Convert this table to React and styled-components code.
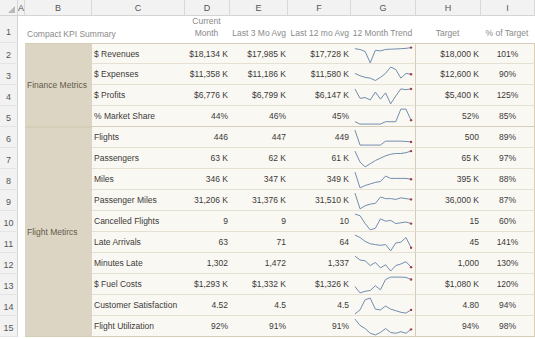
import React from 'react';
import styled, { createGlobalStyle } from 'styled-components';

const GlobalStyle = createGlobalStyle`
  html, body {
    margin: 0;
    padding: 0;
    background: #ffffff;
  }
  body {
    font-family: "Liberation Sans", Arial, sans-serif;
    font-size: 8.5px;
    color: #3a3a3a;
  }
`

const LINE = '#e6e0d2';
const FRAME = '#d6cdb9';

const Sheet = styled.div`
  display: grid;
  grid-template-columns: 18px 7px 67px 93px 45px 58px 63px 65px 65px 54px;
  grid-template-rows: 16px 27px repeat(14, 21px);
  width: 535px;
  height: 339px;
  overflow: hidden;
  background: #ffffff;
`

const Corner = styled.div`
  background: #f2f2f2;
  border-right: 1px solid #d4d4d4;
  border-bottom: 1px solid #d4d4d4;
  position: relative;

  &::after {
    content: '';
    position: absolute;
    right: 2px;
    bottom: 2px;
    border-left: 7px solid transparent;
    border-bottom: 7px solid #b9b9b9;
  }
`

const ColHead = styled.div`
  display: flex;
  align-items: center;
  justify-content: center;
  background: #f2f2f2;
  border-right: 1px solid #d8d8d8;
  border-bottom: 1px solid #d4d4d4;
  color: #555555;
  font-size: 9px;
`

const RowHead = styled.div`
  display: flex;
  align-items: flex-end;
  justify-content: center;
  padding-bottom: ${p => (p.$first ? '5px' : '3px')};
  box-sizing: border-box;
  background: #f2f2f2;
  border-right: 1px solid #d4d4d4;
  border-bottom: 1px solid #e4e4e4;
  color: #555555;
  font-size: 9px;
`

const Blank = styled.div`
  background: #ffffff;
`

const Title = styled.div`
  grid-column: span 2;
  display: flex;
  align-items: flex-end;
  padding: 0 0 4px 2px;
  color: #8a8a8a;
  white-space: nowrap;
`

const HeadCell = styled.div`
  display: flex;
  align-items: flex-end;
  justify-content: ${p => (p.$align === 'center' ? 'center' : 'flex-end')};
  text-align: ${p => p.$align || 'right'};
  padding: 0 2px 4px 0;
  color: #8a8a8a;
  line-height: 12px;
  white-space: nowrap;
`

const Group = styled.div`
  grid-row: span ${p => p.$span};
  display: flex;
  align-items: center;
  padding-left: 2px;
  background: #ddd5c3;
  border-top: 1px solid ${FRAME};
  border-bottom: 1px solid ${FRAME};
  color: #615b4c;
  white-space: nowrap;
`

const Cell = styled.div`
  display: flex;
  align-items: center;
  justify-content: ${p => (p.$align === 'center' ? 'center' : p.$align === 'left' ? 'flex-start' : 'flex-end')};
  padding: 0 2px;
  box-sizing: border-box;
  background: #faf8f2;
  border-bottom: 1px solid ${p => (p.$groupEnd ? FRAME : LINE)};
  border-top: ${p => (p.$top ? `1px solid ${FRAME}` : 'none')};
  border-right: ${p => (p.$edge ? `1px solid ${FRAME}` : 'none')};
  white-space: nowrap;
  overflow: hidden;
`

const TrendCell = styled(Cell)`
  padding: 0;
  align-items: flex-start;
`

const rows = [
  { label: '$ Revenues', cur: '$18,134 K', m3: '$17,985 K', m12: '$17,728 K', target: '$18,000 K', pct: '101%',
    trend: [0.9, 0.85, 0.72, 0.0, 0.8, 0.76, 0.85, 0.87, 0.88, 0.9, 0.92, 0.97] },
  { label: '$ Expenses', cur: '$11,358 K', m3: '$11,186 K', m12: '$11,580 K', target: '$12,600 K', pct: '90%',
    trend: [0.6, 0.45, 0.35, 0.3, 0.15, 0.35, 0.6, 1.0, 0.85, 0.3, 0.6, 0.55] },
  { label: '$ Profits', cur: '$6,776 K', m3: '$6,799 K', m12: '$6,147 K', target: '$5,400 K', pct: '125%',
    trend: [0.95, 0.35, 0.4, 0.25, 0.75, 0.3, 0.7, 0.0, 0.5, 0.95, 0.9, 0.95] },
  { label: '% Market Share', cur: '44%', m3: '46%', m12: '45%', target: '52%', pct: '85%',
    trend: [0.2, 0.05, 0.05, 0.05, 0.05, 0.05, 0.2, 0.2, 0.2, 1.0, 1.0, 0.3] },
  { label: 'Flights', cur: '446', m3: '447', m12: '449', target: '500', pct: '89%',
    trend: [1.0, 0.05, 0.05, 0.05, 0.05, 0.05, 0.3, 0.3, 0.3, 0.3, 0.28, 0.25] },
  { label: 'Passengers', cur: '63 K', m3: '62 K', m12: '61 K', target: '65 K', pct: '97%',
    trend: [1.0, 0.3, 0.0, 0.2, 0.4, 0.55, 0.7, 0.8, 0.85, 0.85, 0.9, 1.0] },
  { label: 'Miles', cur: '346 K', m3: '347 K', m12: '349 K', target: '395 K', pct: '88%',
    trend: [1.0, 0.0, 0.15, 0.25, 0.35, 0.4, 0.75, 0.6, 0.6, 0.6, 0.6, 0.55] },
  { label: 'Passenger Miles', cur: '31,206 K', m3: '31,376 K', m12: '31,510 K', target: '36,000 K', pct: '87%',
    trend: [1.0, 0.0, 0.2, 0.3, 0.35, 0.75, 0.65, 0.65, 0.6, 0.7, 0.65, 0.6] },
  { label: 'Cancelled Flights', cur: '9', m3: '9', m12: '10', target: '15', pct: '60%',
    trend: [1.0, 0.9, 0.4, 0.0, 0.1, 0.7, 0.55, 0.6, 0.4, 0.45, 0.5, 0.4] },
  { label: 'Late Arrivals', cur: '63', m3: '71', m12: '64', target: '45', pct: '141%',
    trend: [1.0, 0.85, 0.6, 0.45, 0.4, 0.35, 0.4, 0.0, 0.5, 0.55, 0.85, 0.2] },
  { label: 'Minutes Late', cur: '1,302', m3: '1,472', m12: '1,337', target: '1,000', pct: '130%',
    trend: [1.0, 0.75, 0.7, 0.4, 0.6, 0.25, 0.45, 0.05, 0.4, 0.5, 0.65, 0.3] },
  { label: '$ Fuel Costs', cur: '$1,293 K', m3: '$1,332 K', m12: '$1,326 K', target: '$1,080 K', pct: '120%',
    trend: [0.4, 0.0, 0.1, 0.15, 0.45, 0.2, 0.85, 1.0, 1.0, 1.0, 0.98, 0.85] },
  { label: 'Customer Satisfaction', cur: '4.52', m3: '4.5', m12: '4.5', target: '4.80', pct: '94%',
    trend: [0.0, 0.25, 0.9, 1.0, 0.3, 0.25, 0.5, 0.3, 0.2, 0.1, 0.05, 0.25] },
  { label: 'Flight Utilization', cur: '92%', m3: '91%', m12: '91%', target: '94%', pct: '98%',
    trend: [1.0, 0.6, 0.4, 0.1, 0.0, 0.15, 0.4, 0.15, 0.1, 0.2, 0.1, 0.35] },
];

function Sparkline({ data }) {
  const w = 65;
  const left = 4;
  const right = 61;
  const top = 3;
  const bottom = 19;
  const pts = data.map((v, i) => [
    left + (i * (right - left)) / (data.length - 1),
    bottom - v * (bottom - top),
  ]);
  const last = pts[pts.length - 1];
  return (
    <svg width={w} height="20" viewBox={`0 0 ${w} 20`}>
      <polyline
        points={pts.map(p => p.join(',')).join(' ')}
        fill="none"
        stroke="#6f8bae"
        strokeWidth="1"
        strokeLinejoin="round"
      />
      <circle cx={last[0]} cy={last[1]} r="1.2" fill="#a13a48" />
    </svg>
  );
}

const letters = ['A', 'B', 'C', 'D', 'E', 'F', 'G', 'H', 'I'];

function App() {
  return (
    <>
      <GlobalStyle />
      <Sheet>
        <Corner />
        {letters.map(l => <ColHead key={l}>{l}</ColHead>)}

        <RowHead $first>1</RowHead>
        <Blank />
        <Title>Compact KPI Summary</Title>
        <HeadCell $align="center">Current<br />Month</HeadCell>
        <HeadCell>Last 3 Mo Avg</HeadCell>
        <HeadCell>Last 12 mo Avg</HeadCell>
        <HeadCell $align="center">12 Month Trend</HeadCell>
        <HeadCell $align="center">Target</HeadCell>
        <HeadCell $align="center">% of Target</HeadCell>

        {rows.map((r, i) => {
          const top = i === 0;
          const groupEnd = i === 3 || i === rows.length - 1;
          return (
            <React.Fragment key={r.label}>
              <RowHead>{i + 2}</RowHead>
              <Blank />
              {i === 0 && <Group $span={4}>Finance Metrics</Group>}
              {i === 4 && <Group $span={10}>Flight Metircs</Group>}
              <Cell $align="left" $top={top} $groupEnd={groupEnd}>{r.label}</Cell>
              <Cell $top={top} $groupEnd={groupEnd}>{r.cur}</Cell>
              <Cell $top={top} $groupEnd={groupEnd}>{r.m3}</Cell>
              <Cell $top={top} $groupEnd={groupEnd}>{r.m12}</Cell>
              <TrendCell $top={top} $groupEnd={groupEnd} $edge>
                <Sparkline data={r.trend} />
              </TrendCell>
              <Cell $top={top} $groupEnd={groupEnd}>{r.target}</Cell>
              <Cell $align="center" $top={top} $groupEnd={groupEnd} $edge>{r.pct}</Cell>
            </React.Fragment>
          );
        })}
      </Sheet>
    </>
  );
}

export default App;
